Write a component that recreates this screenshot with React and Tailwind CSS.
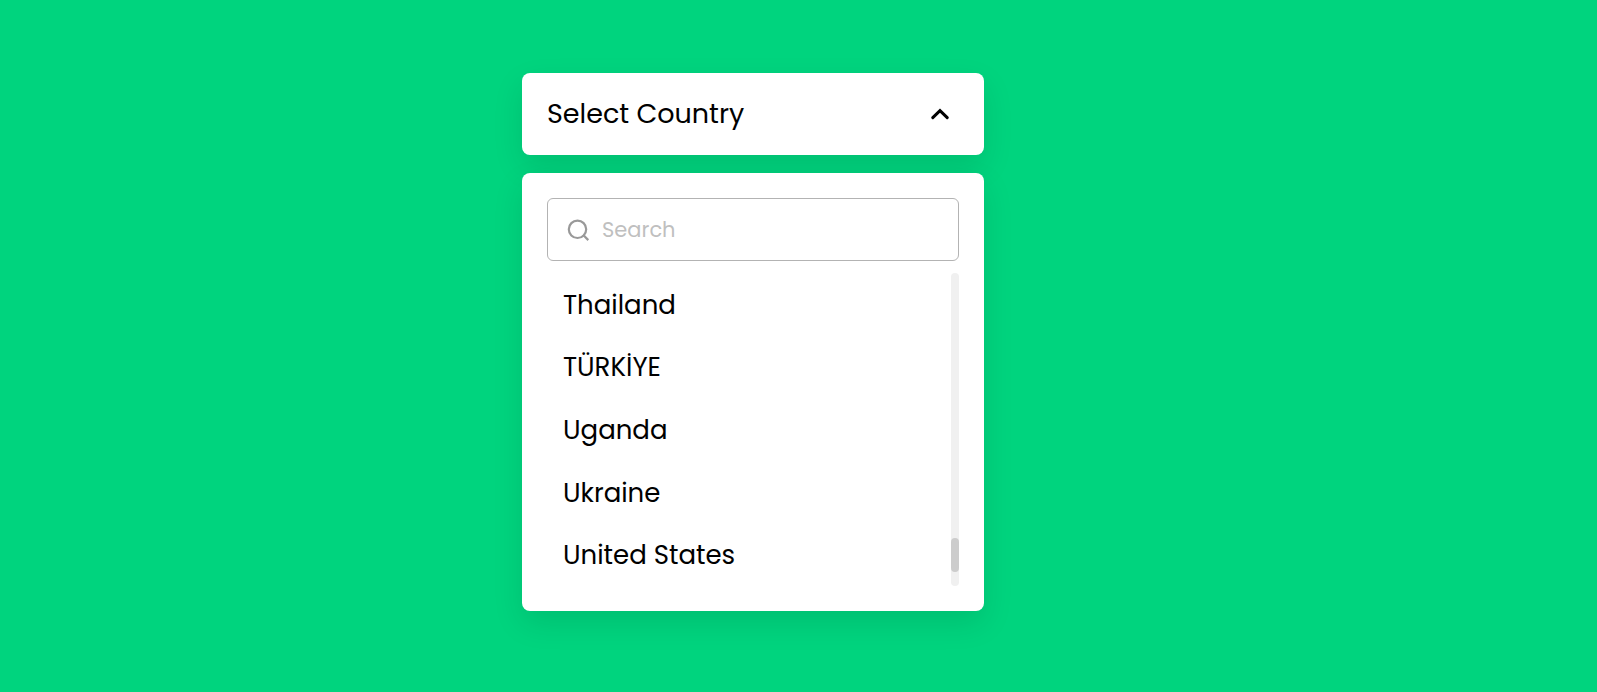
import { useState } from "react";

const countries = ["Thailand", "TÜRKİYE", "Uganda", "Ukraine", "United States"];

function SearchIcon() {
  return (
    <svg viewBox="0 0 24 24" className="size-6 shrink-0" fill="none" stroke="#999" strokeWidth="2.2" aria-hidden="true">
      <circle cx="11.5" cy="11.3" r="8.7" />
      <path d="M17 16.8l5.3 5.3" />
    </svg>
  );
}

function ChevronUp() {
  return (
    <svg viewBox="0 0 18 12" className="mr-2.5 h-3 w-[18px] shrink-0" fill="none" stroke="#000" strokeWidth="3" strokeLinecap="round" strokeLinejoin="miter" aria-hidden="true">
      <path d="M1.8 9.6L9 2.7l7.2 6.9" />
    </svg>
  );
}

export default function App() {
  const [query, setQuery] = useState("");
  const shown = countries.filter((c) => c.toLowerCase().startsWith(query.toLowerCase()));

  return (
    <main className="min-h-screen bg-[#00d47e] pt-[73px] pb-20 pl-[522px] font-[Poppins,Inter,sans-serif] text-black">
      <div className="flex w-full max-w-[462px] flex-col gap-[18px]">
        <button
          type="button"
          aria-expanded="true"
          aria-controls="country-panel"
          className="flex h-[82px] items-center justify-between rounded-lg bg-white px-[25px] text-[27px] shadow-[0_12px_31px_rgba(0,0,0,0.1)]"
        >
          <span>Select Country</span>
          <ChevronUp />
        </button>
        <section id="country-panel" className="rounded-lg bg-white p-[25px] shadow-[0_12px_31px_rgba(0,0,0,0.1)]">
          <label className="flex h-[63px] items-center gap-3 rounded-md border border-[#b3b3b3] px-[18px]">
            <SearchIcon />
            <input
              type="text"
              aria-label="Search"
              placeholder="Search"
              value={query}
              onChange={(e) => setQuery(e.target.value)}
              className="w-full min-w-0 bg-transparent text-[21px] outline-none placeholder:text-[#bfbfbf]"
            />
          </label>
          <div className="mt-3 flex h-[313px]">
            <ul className="-mb-px grid flex-1 grid-rows-5 pt-px">
              {shown.map((c) => (
                <li key={c} className="flex items-center px-4 text-[26px]">
                  {c}
                </li>
              ))}
            </ul>
            <div className="flex w-2 flex-col justify-end rounded-full bg-[#f0f0f0] pb-3.5">
              <div className="h-[34px] rounded-full bg-[#ccc]" />
            </div>
          </div>
        </section>
      </div>
    </main>
  );
}
